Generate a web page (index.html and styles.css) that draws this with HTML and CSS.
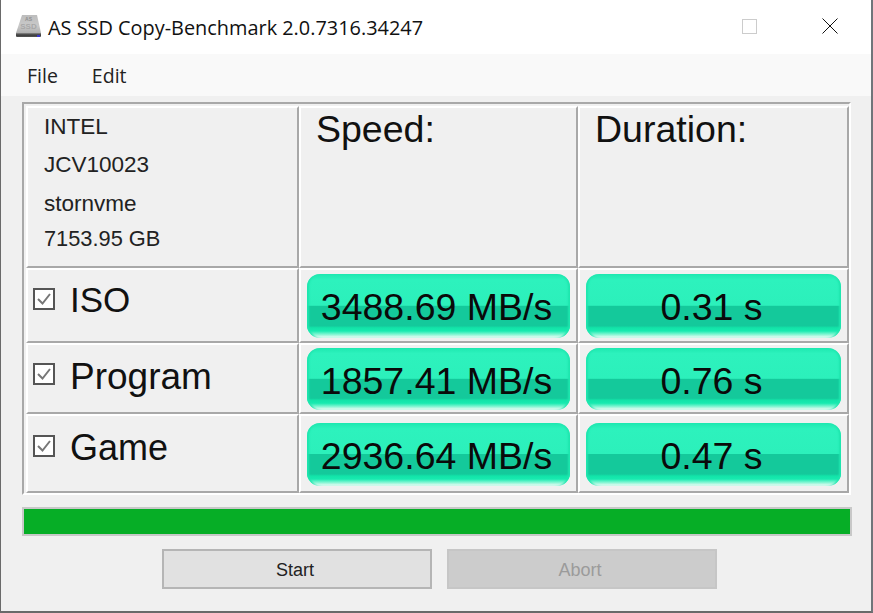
FILE: index.html
```html
<!DOCTYPE html>
<html lang="en">
<head>
<meta charset="utf-8">
<title>AS SSD Copy-Benchmark</title>
<link rel="stylesheet" href="styles.css">
</head>
<body>
<div class="window">
  <header class="titlebar">
    <svg class="appicon" width="27" height="24" viewBox="0 0 27 24">
      <defs>
        <linearGradient id="d" x1="0" y1="0" x2="0" y2="1"><stop offset="0" stop-color="#bdbdbd"/><stop offset="0.6" stop-color="#c9c9c9"/><stop offset="1" stop-color="#b0b0b0"/></linearGradient>
        <linearGradient id="f" x1="0" y1="0" x2="0" y2="1"><stop offset="0" stop-color="#8c8c8c"/><stop offset="0.5" stop-color="#3a3a3a"/><stop offset="1" stop-color="#555"/></linearGradient>
      </defs>
      <path d="M7 1H22L26 19H1Z" fill="url(#d)"/>
      <path d="M1 19H26V22Q26 23 25 23H2Q1 23 1 22Z" fill="url(#f)"/>
      <text class="icon-as" x="13.500" y="6.500" text-anchor="middle">AS</text>
      <text class="icon-ssd" x="13.500" y="15" text-anchor="middle">SSD</text>
      <rect x="22" y="21" width="3" height="2" fill="#3a36c8"/>
    </svg>
    <span class="title">AS SSD Copy-Benchmark 2.0.7316.34247</span>
    <div class="controls">
      <svg class="ctl-max" width="15" height="15" viewBox="0 0 15 15"><rect x="0.5" y="0.5" width="14" height="14" fill="none" stroke="#ccc"/></svg>
      <svg class="ctl-close" width="16" height="16" viewBox="0 0 16 16"><path d="M0.500 0.500L15.500 15.500M15.500 0.500L0.500 15.500" stroke="#111" fill="none"/></svg>
    </div>
  </header>
  <nav class="menubar"><span class="menu">File</span><span class="menu">Edit</span></nav>
  <main class="content">
    <section class="table">
      <div class="cell info">
        <span class="i1">INTEL</span>
        <span class="i2">JCV10023</span>
        <span class="i3">stornvme</span>
        <span class="i4">7153.95 GB</span>
      </div>
      <div class="cell head">Speed:</div>
      <div class="cell head dur">Duration:</div>

      <div class="cell name"><span class="check"><svg width="22" height="22" viewBox="0 0 22 22"><rect x="1" y="1" width="20" height="20" fill="#fff" stroke="#555" stroke-width="2"/><path d="M5 11L9.500 15.500L17 6" fill="none" stroke="#777" stroke-width="2"/></svg></span><span class="n-iso">ISO</span></div>
      <div class="cell val r1"><div class="bar">3488.69 MB/s</div></div>
      <div class="cell val r1"><div class="bar">0.31 s</div></div>

      <div class="cell name"><span class="check"><svg width="22" height="22" viewBox="0 0 22 22"><rect x="1" y="1" width="20" height="20" fill="#fff" stroke="#555" stroke-width="2"/><path d="M5 11L9.500 15.500L17 6" fill="none" stroke="#777" stroke-width="2"/></svg></span><span class="n-prog">Program</span></div>
      <div class="cell val r2"><div class="bar">1857.41 MB/s</div></div>
      <div class="cell val r2"><div class="bar">0.76 s</div></div>

      <div class="cell name n-game"><span class="check"><svg width="22" height="22" viewBox="0 0 22 22"><rect x="1" y="1" width="20" height="20" fill="#fff" stroke="#555" stroke-width="2"/><path d="M5 11L9.500 15.500L17 6" fill="none" stroke="#777" stroke-width="2"/></svg></span>Game</div>
      <div class="cell val r3"><div class="bar">2936.64 MB/s</div></div>
      <div class="cell val r3"><div class="bar">0.47 s</div></div>
    </section>
    <div class="progress"></div>
    <div class="buttons">
      <button class="btn">Start</button>
      <button class="btn off">Abort</button>
    </div>
  </main>
</div>
</body>
</html>
```
FILE: styles.css
```css
* { box-sizing: border-box; }
html, body { margin: 0; padding: 0; }
body { width: 873px; height: 613px; overflow: hidden; background: #fff; }
.window {
  width: 873px; height: 613px;
  border-left: 1px solid #6a6a6a;
  border-right: 2px solid #70757a;
  border-bottom: 2px solid #6a6a6a;
  background: #f0f0f0;
  display: flex; flex-direction: column;
  font-family: "Open Sans", "Noto Sans", sans-serif;
  color: #111;
}
.titlebar { height: 54px; background: #fff; display: flex; align-items: center; padding-left: 14px; }
.appicon { margin-right: 6px; margin-top: -2px; }
.icon-as { font-family: "Liberation Sans", sans-serif; font-size: 5px; font-weight: bold; fill: #8f8f8f; }
.icon-ssd { font-family: "Liberation Sans", sans-serif; font-size: 8px; font-weight: bold; fill: #a8a8a8; }
.title { font-size: 19.900px; white-space: nowrap; margin-top: 1px; }
.controls { margin-left: auto; display: flex; align-items: center; gap: 65px; padding-right: 33px; margin-top: -2px; }
.menubar { height: 42px; background: #f9f9f9; display: flex; align-items: center; gap: 34px; padding-left: 26px; font-size: 19.500px; color: #222; }
.content { flex: 1; padding: 6px 21px 0; }
.table {
  width: 829px; height: 393px;
  border-top: 2px solid #a8a8a8;
  border-left: 2px solid #a8a8a8;
  border-right: 2px solid #fff;
  border-bottom: 2px solid #fff;
  padding: 2px 0 0 2px;
  display: grid;
  grid-template-columns: 273px 279px 271px;
  grid-template-rows: 162px 75px 71px 79px;
  font-family: "Liberation Sans", Arial, sans-serif;
}
.cell { border-right: 2px solid #a8a8a8; border-bottom: 2px solid #a8a8a8; border-left: 2px solid #fff; border-top: 2px solid #fff; }
.info { font-size: 22.500px; display: flex; flex-direction: column; color: #222; padding-left: 16px; }
.i1, .i2, .i3, .i4 { display: block; line-height: 28px; }
.i1 { margin-top: 5px; }
.i2 { margin-top: 10px; }
.i3 { margin-top: 11px; }
.i4 { margin-top: 7px; font-size: 21.800px; }
.head { font-size: 37.500px; padding-left: 15px; padding-top: 1px; line-height: 40px; color: #111; }
.name { font-size: 37px; display: flex; align-items: flex-start; padding-left: 5px; padding-top: 9px; line-height: 40px; color: #111; }
.n-iso { font-size: 35px; margin-top: 1px; }
.n-prog { margin-top: 3px; }
.n-game { font-size: 36px; padding-top: 12px; }
.check { margin-right: 15px; margin-top: 9px; height: 22px; width: 22px; display: block; }
.n-game .check { margin-top: 7px; }
.check svg { display: block; }
.val { padding: 4px 6px 3px; }
.r2 { padding-top: 3px; padding-bottom: 2px; }
.r3 { padding-top: 7px; padding-bottom: 5px; }
.bar {
  height: 100%;
  border-radius: 13px;
  display: flex; align-items: center; justify-content: center;
  font-family: "Liberation Sans", Arial, sans-serif;
  font-size: 37.500px;
  padding: 2px 4px 0 0;
  color: #0a0a0a;
  white-space: nowrap;
  box-shadow: inset 3px 0 2px -1px #1ee6ae, inset -3px 0 2px -1px #1ee6ae;
  background: linear-gradient(to bottom, #1ee8b0 0, #2df2bd 9%, #2cf0bb 49%, #14c99b 50%, #14c99b 81%, #12e3a8 84%, #18eab0 89%, #7af5d0 94%, #d0faec 98%, #ecfcf7 100%);
}
.r2 .bar, .r3 .bar { padding-top: 4px; }
.progress { margin-top: 12px; width: 830px; height: 29px; background: #06ae26; border: 2px solid #c8c8c8; }
.buttons { display: flex; gap: 15px; margin-top: 13px; padding-left: 140px; }
.btn { width: 270px; height: 40px; background: #e1e1e1; border: 2px solid #b5b5b5; font-family: "Liberation Sans", Arial, sans-serif; font-size: 18px; color: #222; padding: 3px 4px 0 0; }
.btn.off { background: #cccccc; border-color: #c6c6c6; color: #9b9b9b; }
```
